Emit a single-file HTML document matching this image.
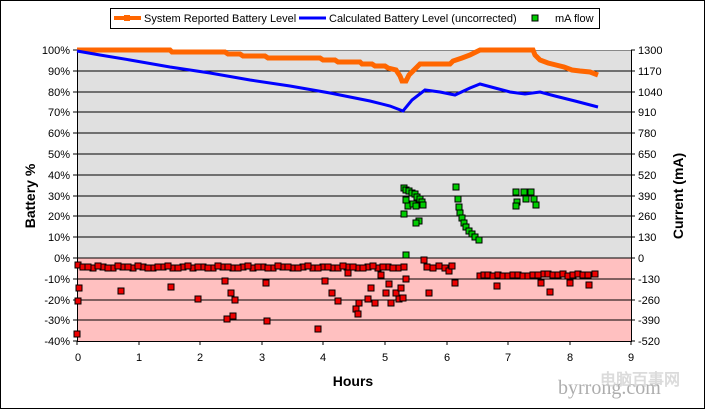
<!DOCTYPE html>
<html><head><style>
html,body{margin:0;padding:0;background:#fff}
svg{display:block;font-family:"Liberation Sans",Arial,sans-serif}
</style></head><body>
<svg width="705" height="409" viewBox="0 0 705 409" xmlns="http://www.w3.org/2000/svg">
<rect x="0.5" y="0.5" width="704" height="408" fill="#fff" stroke="#000"/>
<rect x="77" y="50" width="554" height="208" fill="#e0e0e0"/>
<rect x="77" y="258" width="554" height="83" fill="#ffc0c0"/>
<g stroke="#000" stroke-width="1">
<line x1="77" y1="71" x2="631" y2="71"/><line x1="77" y1="92" x2="631" y2="92"/>
<line x1="77" y1="112" x2="631" y2="112"/><line x1="77" y1="133" x2="631" y2="133"/>
<line x1="77" y1="154" x2="631" y2="154"/><line x1="77" y1="175" x2="631" y2="175"/>
<line x1="77" y1="196" x2="631" y2="196"/><line x1="77" y1="216" x2="631" y2="216"/>
<line x1="77" y1="237" x2="631" y2="237"/><line x1="77" y1="258" x2="631" y2="258"/>
<line x1="77" y1="279" x2="631" y2="279"/><line x1="77" y1="300" x2="631" y2="300"/>
<line x1="77" y1="320" x2="631" y2="320"/>
<line x1="77.5" y1="50" x2="77.5" y2="341"/>
<line x1="631.5" y1="50" x2="631.5" y2="341"/>
<line x1="77" y1="341.5" x2="632" y2="341.5"/>
</g>
<line x1="77" y1="50.5" x2="631" y2="50.5" stroke="#888"/>
<g stroke="#000">
<path d="M77 341v4M139 341v4M200 341v4M262 341v4M323 341v4M385 341v4M447 341v4M508 341v4M570 341v4M631 341v4"/>
<path d="M631 50h4M631 71h4M631 92h4M631 112h4M631 133h4M631 154h4M631 175h4M631 196h4M631 216h4M631 237h4M631 258h4M631 279h4M631 300h4M631 320h4M631 341h4"/>
<path d="M73 50h4M73 71h4M73 92h4M73 112h4M73 133h4M73 154h4M73 175h4M73 196h4M73 216h4M73 237h4M73 258h4M73 279h4M73 300h4M73 320h4M73 341h4"/>
</g>
<g font-size="11" fill="#000" text-anchor="end">
<text x="70" y="54">100%</text><text x="70" y="75">90%</text><text x="70" y="96">80%</text>
<text x="70" y="116">70%</text><text x="70" y="137">60%</text><text x="70" y="158">50%</text>
<text x="70" y="179">40%</text><text x="70" y="200">30%</text><text x="70" y="220">20%</text>
<text x="70" y="241">10%</text><text x="70" y="262">0%</text><text x="70" y="283">-10%</text>
<text x="70" y="304">-20%</text><text x="70" y="324">-30%</text><text x="70" y="345">-40%</text>
</g>
<g font-size="11" fill="#000">
<text x="638" y="54">1300</text><text x="638" y="75">1170</text><text x="638" y="96">1040</text>
<text x="638" y="116">910</text><text x="638" y="137">780</text><text x="638" y="158">650</text>
<text x="638" y="179">520</text><text x="638" y="200">390</text><text x="638" y="220">260</text>
<text x="638" y="241">130</text><text x="638" y="262">0</text><text x="638" y="283">-130</text>
<text x="638" y="304">-260</text><text x="638" y="324">-390</text><text x="638" y="345">-520</text>
</g>
<g font-size="11" text-anchor="middle">
<text x="78" y="361">0</text><text x="139" y="361">1</text><text x="200" y="361">2</text><text x="262" y="361">3</text><text x="323" y="361">4</text><text x="385" y="361">5</text><text x="447" y="361">6</text><text x="508" y="361">7</text><text x="570" y="361">8</text><text x="631" y="361">9</text>
</g>
<text x="353" y="386" font-size="14" font-weight="bold" text-anchor="middle">Hours</text>
<text transform="translate(35,196) rotate(-90)" font-size="14" font-weight="bold" text-anchor="middle">Battery %</text>
<text transform="translate(683,196) rotate(-90)" font-size="14" font-weight="bold" text-anchor="middle">Current (mA)</text>
<polyline fill="none" stroke="#ff6600" stroke-width="5" points="77,50 170,50 172,52 225,52 228,54 240,54 243,56 265,56 268,58 320,58 323,60 335,60 338,62 360,62 362,64 372,64 375,66 385,66 388,68 396,70 400,76 402,81 406,81 409,75 415,69 420,64 450,64 453,61 462,58 470,55 480,50 533,50 535,55 540,60 548,63 556,65 564,67 572,70 580,71 590,72 598,75"/>
<polyline fill="none" stroke="#0000ff" stroke-width="3" points="77,51 100,55 130,60 170,67 210,73 250,80 290,86 330,93 370,101 390,106 403,111 412,100 425,90 440,92 455,95 470,88 480,84 495,88 510,92 525,94 540,92 555,96 575,101 598,107"/>
<g fill="#00cc00" stroke="#000" stroke-width="1">
<rect x="401" y="185" width="6" height="6"/><rect x="403" y="187" width="6" height="6"/><rect x="406" y="188" width="6" height="6"/><rect x="409" y="190" width="6" height="6"/><rect x="412" y="191" width="6" height="6"/><rect x="414" y="194" width="6" height="6"/><rect x="417" y="196" width="6" height="6"/><rect x="419" y="199" width="6" height="6"/><rect x="420" y="202" width="6" height="6"/>
<rect x="403" y="197" width="6" height="6"/><rect x="405" y="203" width="6" height="6"/><rect x="410" y="201" width="6" height="6"/><rect x="413" y="203" width="6" height="6"/>
<rect x="401" y="211" width="6" height="6"/><rect x="416" y="218" width="6" height="6"/><rect x="413" y="220" width="6" height="6"/><rect x="403" y="252" width="6" height="6"/>
<rect x="453" y="184" width="6" height="6"/><rect x="455" y="196" width="6" height="6"/><rect x="456" y="204" width="6" height="6"/><rect x="457" y="210" width="6" height="6"/><rect x="459" y="215" width="6" height="6"/><rect x="461" y="220" width="6" height="6"/><rect x="463" y="224" width="6" height="6"/><rect x="466" y="228" width="6" height="6"/><rect x="469" y="231" width="6" height="6"/><rect x="472" y="234" width="6" height="6"/><rect x="476" y="237" width="6" height="6"/>
<rect x="513" y="189" width="6" height="6"/><rect x="514" y="199" width="6" height="6"/><rect x="521" y="189" width="6" height="6"/><rect x="523" y="196" width="6" height="6"/><rect x="528" y="189" width="6" height="6"/><rect x="531" y="196" width="6" height="6"/><rect x="533" y="202" width="6" height="6"/><rect x="513" y="203" width="6" height="6"/>
</g>
<g fill="#ee0000" stroke="#000" stroke-width="1">
<rect x="75" y="262" width="6" height="6"/><rect x="76" y="285" width="6" height="6"/><rect x="75" y="298" width="6" height="6"/><rect x="74" y="331" width="6" height="6"/>
<rect x="80" y="264" width="6" height="6"/><rect x="90" y="265" width="6" height="6"/><rect x="100" y="264" width="6" height="6"/><rect x="110" y="265" width="6" height="6"/><rect x="120" y="264" width="6" height="6"/><rect x="130" y="265" width="6" height="6"/><rect x="140" y="264" width="6" height="6"/><rect x="150" y="265" width="6" height="6"/><rect x="160" y="264" width="6" height="6"/><rect x="170" y="265" width="6" height="6"/><rect x="180" y="264" width="6" height="6"/><rect x="190" y="265" width="6" height="6"/><rect x="200" y="264" width="6" height="6"/><rect x="210" y="265" width="6" height="6"/><rect x="220" y="264" width="6" height="6"/><rect x="230" y="265" width="6" height="6"/><rect x="240" y="264" width="6" height="6"/><rect x="250" y="265" width="6" height="6"/><rect x="260" y="264" width="6" height="6"/><rect x="270" y="265" width="6" height="6"/><rect x="280" y="264" width="6" height="6"/><rect x="290" y="265" width="6" height="6"/><rect x="300" y="264" width="6" height="6"/><rect x="310" y="265" width="6" height="6"/><rect x="320" y="264" width="6" height="6"/><rect x="330" y="265" width="6" height="6"/><rect x="344" y="264" width="6" height="6"/><rect x="355" y="265" width="6" height="6"/><rect x="365" y="264" width="6" height="6"/><rect x="375" y="265" width="6" height="6"/><rect x="385" y="264" width="6" height="6"/><rect x="395" y="265" width="6" height="6"/>
<rect x="85" y="264" width="6" height="6"/><rect x="95" y="263" width="6" height="6"/><rect x="105" y="265" width="6" height="6"/><rect x="115" y="263" width="6" height="6"/><rect x="118" y="288" width="6" height="6"/><rect x="125" y="264" width="6" height="6"/><rect x="135" y="263" width="6" height="6"/><rect x="145" y="265" width="6" height="6"/><rect x="155" y="264" width="6" height="6"/><rect x="165" y="263" width="6" height="6"/><rect x="168" y="284" width="6" height="6"/><rect x="175" y="265" width="6" height="6"/><rect x="185" y="263" width="6" height="6"/><rect x="195" y="264" width="6" height="6"/><rect x="195" y="296" width="6" height="6"/><rect x="205" y="265" width="6" height="6"/><rect x="215" y="263" width="6" height="6"/><rect x="222" y="278" width="6" height="6"/><rect x="225" y="264" width="6" height="6"/><rect x="224" y="316" width="6" height="6"/><rect x="228" y="290" width="6" height="6"/><rect x="230" y="313" width="6" height="6"/><rect x="232" y="297" width="6" height="6"/><rect x="235" y="265" width="6" height="6"/><rect x="245" y="263" width="6" height="6"/><rect x="255" y="264" width="6" height="6"/><rect x="263" y="280" width="6" height="6"/><rect x="264" y="318" width="6" height="6"/><rect x="265" y="265" width="6" height="6"/><rect x="275" y="263" width="6" height="6"/><rect x="285" y="264" width="6" height="6"/><rect x="295" y="265" width="6" height="6"/><rect x="305" y="263" width="6" height="6"/><rect x="315" y="326" width="6" height="6"/><rect x="315" y="265" width="6" height="6"/><rect x="322" y="278" width="6" height="6"/><rect x="325" y="264" width="6" height="6"/><rect x="329" y="290" width="6" height="6"/><rect x="335" y="298" width="6" height="6"/><rect x="335" y="265" width="6" height="6"/><rect x="340" y="263" width="6" height="6"/><rect x="345" y="270" width="6" height="6"/><rect x="350" y="264" width="6" height="6"/><rect x="353" y="306" width="6" height="6"/><rect x="355" y="311" width="6" height="6"/><rect x="356" y="300" width="6" height="6"/><rect x="360" y="265" width="6" height="6"/><rect x="365" y="296" width="6" height="6"/><rect x="368" y="285" width="6" height="6"/><rect x="370" y="263" width="6" height="6"/><rect x="372" y="300" width="6" height="6"/><rect x="378" y="272" width="6" height="6"/><rect x="380" y="264" width="6" height="6"/><rect x="383" y="290" width="6" height="6"/><rect x="386" y="281" width="6" height="6"/><rect x="388" y="300" width="6" height="6"/><rect x="390" y="265" width="6" height="6"/><rect x="393" y="290" width="6" height="6"/><rect x="396" y="296" width="6" height="6"/><rect x="398" y="285" width="6" height="6"/><rect x="400" y="295" width="6" height="6"/><rect x="401" y="264" width="6" height="6"/><rect x="403" y="276" width="6" height="6"/>
<rect x="421" y="257" width="6" height="6"/><rect x="424" y="264" width="6" height="6"/><rect x="426" y="290" width="6" height="6"/><rect x="430" y="265" width="6" height="6"/><rect x="436" y="263" width="6" height="6"/><rect x="442" y="265" width="6" height="6"/><rect x="446" y="268" width="6" height="6"/><rect x="449" y="263" width="6" height="6"/><rect x="452" y="280" width="6" height="6"/>
<rect x="477" y="273" width="6" height="6"/><rect x="481" y="272" width="6" height="6"/><rect x="485" y="272" width="6" height="6"/><rect x="490" y="273" width="6" height="6"/><rect x="494" y="283" width="6" height="6"/><rect x="495" y="272" width="6" height="6"/><rect x="500" y="273" width="6" height="6"/><rect x="505" y="273" width="6" height="6"/><rect x="510" y="272" width="6" height="6"/><rect x="515" y="272" width="6" height="6"/><rect x="520" y="273" width="6" height="6"/><rect x="525" y="273" width="6" height="6"/><rect x="530" y="272" width="6" height="6"/><rect x="535" y="272" width="6" height="6"/><rect x="538" y="280" width="6" height="6"/><rect x="541" y="271" width="6" height="6"/><rect x="545" y="271" width="6" height="6"/><rect x="547" y="289" width="6" height="6"/><rect x="550" y="272" width="6" height="6"/><rect x="555" y="272" width="6" height="6"/><rect x="560" y="271" width="6" height="6"/><rect x="565" y="273" width="6" height="6"/><rect x="567" y="280" width="6" height="6"/><rect x="570" y="272" width="6" height="6"/><rect x="575" y="271" width="6" height="6"/><rect x="580" y="272" width="6" height="6"/><rect x="585" y="272" width="6" height="6"/><rect x="586" y="282" width="6" height="6"/><rect x="592" y="271" width="6" height="6"/>
</g>
<rect x="110.5" y="8.5" width="489" height="20" fill="#fff" stroke="#000"/>
<line x1="114" y1="18" x2="141" y2="18" stroke="#ff6600" stroke-width="4"/>
<rect x="124" y="15" width="6" height="6" fill="#ff6600"/>
<text x="144" y="22" font-size="11">System Reported Battery Level</text>
<line x1="299" y1="18" x2="326" y2="18" stroke="#0000ff" stroke-width="3"/>
<text x="329" y="22" font-size="11">Calculated Battery Level (uncorrected)</text>
<rect x="532" y="15" width="6" height="6" fill="#00cc00" stroke="#000"/>
<text x="555" y="22" font-size="11">mA flow</text>
<text x="558" y="394" font-size="20" font-family="Liberation Serif,serif" fill="#999" opacity="0.8">byrrong.com</text>
<text x="600" y="385" font-size="16" font-weight="bold" fill="#ccc" opacity="0.7">电脑百事网</text>
</svg>
</body></html>
